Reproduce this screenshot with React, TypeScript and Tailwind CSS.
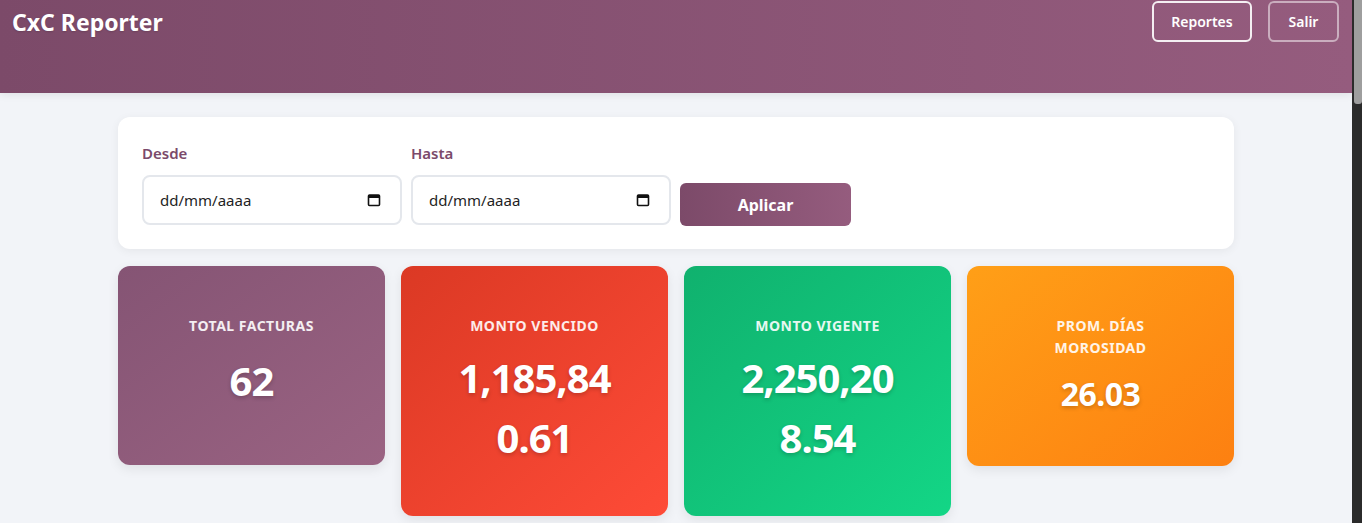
import React from "react";

function CalendarIcon() {
  return (
    <svg width="14" height="14" viewBox="0 0 14 14" className="shrink-0">
      <rect x="1.5" y="2" width="11" height="10.5" rx="1" fill="none" stroke="#111" strokeWidth="1.6" />
      <rect x="1.5" y="2" width="11" height="3" fill="#111" />
    </svg>
  );
}

function DateField({ label }: { label: string }) {
  return (
    <div className="flex flex-col">
      <div className="mb-[11px] text-[15px] font-semibold leading-[22px] text-[#7b4a6b]">{label}</div>
      <div className="flex h-[50px] w-[260px] items-center justify-between rounded-[8px] border-2 border-[#e4e7ec] bg-white pl-[16px] pr-[19px] text-[15px] text-[#1f1f1f]">
        <span>dd/mm/aaaa</span>
        <CalendarIcon />
      </div>
    </div>
  );
}

export default function App() {
  return (
    <div className="flex h-screen overflow-hidden bg-[#f2f4f8] font-['Noto_Sans','Open_Sans',sans-serif]">
      <div className="min-w-0 flex-1">
        <header className="flex h-[93px] items-start justify-between bg-gradient-to-r from-[#7c4a69] to-[#955c7e] px-3 pt-[1px] shadow-[0_2px_8px_rgba(0,0,0,0.08)]">
          <h1 className="mt-[3px] text-[23px] font-bold leading-[36px] text-white [text-shadow:0_1px_2px_rgba(0,0,0,0.15)]">
            CxC Reporter
          </h1>
          <div className="flex gap-4">
            <button className="h-[41px] w-[100px] rounded-[6px] border-2 border-white/90 text-[14px] font-semibold text-white">
              Reportes
            </button>
            <button className="mr-[1px] h-[41px] w-[71px] rounded-[6px] border-2 border-white/50 text-[14px] font-semibold text-white">
              Salir
            </button>
          </div>
        </header>

        <main className="mx-auto w-full max-w-[1116px] pt-6">
          <section className="rounded-[12px] bg-white px-6 pb-6 pt-[25px] shadow-[0_2px_10px_rgba(0,0,0,0.06)]">
            <div className="flex items-end gap-[9px]">
              <DateField label="Desde" />
              <DateField label="Hasta" />
              <button className="mb-[-1px] h-[43px] w-[171px] rounded-[6px] bg-gradient-to-r from-[#7c4a69] to-[#955c7e] text-[16px] font-bold text-white">
                Aplicar
              </button>
            </div>
          </section>

          <section className="mt-[17px] grid grid-cols-4 items-start gap-4">
            <div className="rounded-[12px] bg-gradient-to-br from-[#855474] to-[#9a6382] px-12 pb-[54px] pt-[49px] text-center text-white shadow-[0_4px_12px_rgba(0,0,0,0.08)]">
              <div className="text-[14px] font-bold uppercase leading-[22px] tracking-[0.5px] text-white/90">Total Facturas</div>
              <div className="mt-[14px] text-[40px] font-bold leading-[60px] tracking-[-1px] [text-shadow:0_2px_4px_rgba(0,0,0,0.2)]">62</div>
            </div>

            <div className="rounded-[12px] bg-gradient-to-br from-[#db3924] to-[#fe4b37] px-12 pb-[48px] pt-[49px] text-center text-white shadow-[0_4px_12px_rgba(0,0,0,0.08)]">
              <div className="text-[14px] font-bold uppercase leading-[22px] tracking-[0.5px] text-white/90">Monto Vencido</div>
              <div className="mt-[11px] text-[40px] font-bold leading-[60px] tracking-[-1px] [text-shadow:0_2px_4px_rgba(0,0,0,0.2)]">
                <span className="block">1,185,84</span>
                <span className="block">0.61</span>
              </div>
            </div>

            <div className="rounded-[12px] bg-gradient-to-br from-[#10b16e] to-[#13d686] px-12 pb-[48px] pt-[49px] text-center text-white shadow-[0_4px_12px_rgba(0,0,0,0.08)]">
              <div className="text-[14px] font-bold uppercase leading-[22px] tracking-[0.5px] text-white/90">Monto Vigente</div>
              <div className="mt-[11px] text-[40px] font-bold leading-[60px] tracking-[-1px] [text-shadow:0_2px_4px_rgba(0,0,0,0.2)]">
                <span className="block">2,250,20</span>
                <span className="block">8.54</span>
              </div>
            </div>

            <div className="rounded-[12px] bg-gradient-to-br from-[#ff9f17] to-[#fd8011] px-12 pb-[48px] pt-[49px] text-center text-white shadow-[0_4px_12px_rgba(0,0,0,0.08)]">
              <div className="text-[14px] font-bold uppercase leading-[22px] tracking-[0.5px] text-white/90">
                <span className="block">Prom. Días</span>
                <span className="block">Morosidad</span>
              </div>
              <div className="mt-[11px] text-[32px] font-bold leading-[48px] tracking-[-0.5px] [text-shadow:0_2px_4px_rgba(0,0,0,0.2)]">26.03</div>
            </div>
          </section>
        </main>
      </div>

      <div className="flex w-[10px] shrink-0 justify-end bg-[#2b2b2b]">
        <div className="h-[104px] w-[8px] rounded-b-[3px] bg-[#9e9e9e]" />
      </div>
    </div>
  );
}
